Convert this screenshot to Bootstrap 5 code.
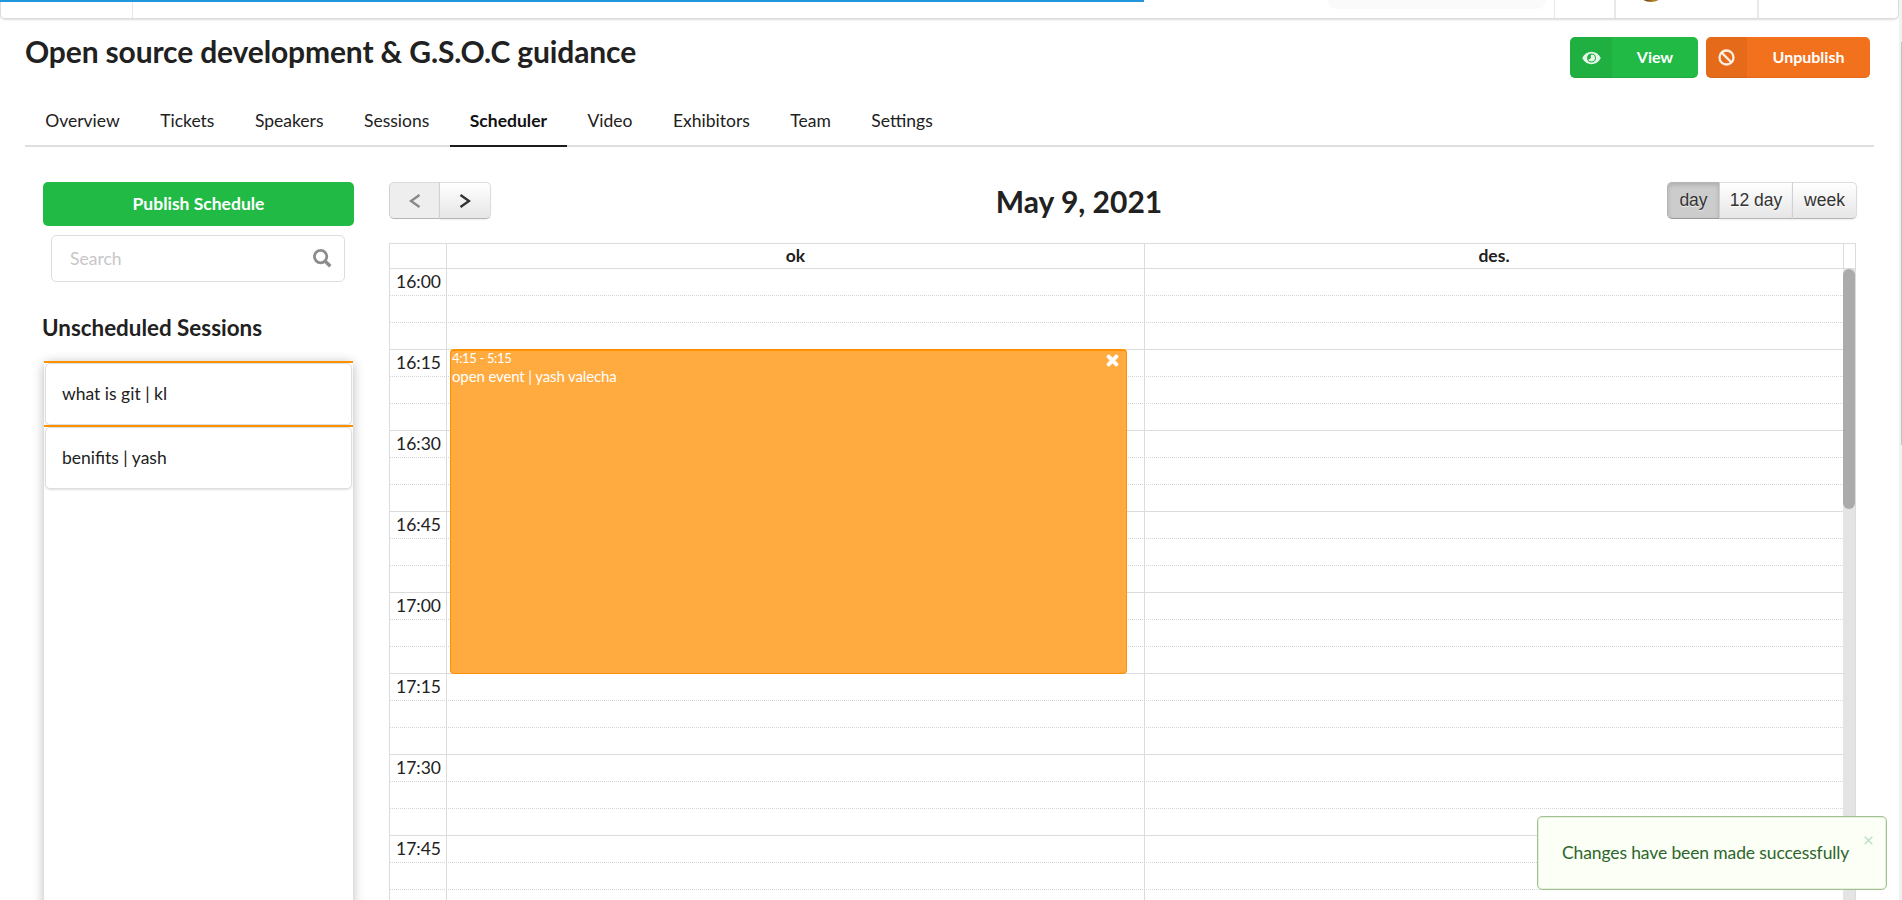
<!DOCTYPE html>
<html lang="en">
<head>
<meta charset="utf-8">
<title>Scheduler</title>
<link href="https://cdn.jsdelivr.net/npm/bootstrap@5.3.0/dist/css/bootstrap.min.css" rel="stylesheet">
<style>
html,body{height:900px;overflow:hidden}
body{font-family:Lato,"Liberation Sans",sans-serif;font-size:17.5px;line-height:25px;color:#212121;background:#fff}
.page{width:1899px;height:900px;overflow:hidden}
.progressline{top:0;left:0;width:1144px;height:2px;background:#2196dc;z-index:5}
.topbar{height:19px;width:1899px;border:1px solid #dcdcdc;border-top:0;border-radius:0 0 5px 5px;box-shadow:0 1px 2px rgba(34,36,38,.15)}
.tb-logo{width:132px;border-right:1px solid #e8e8e8}
.tb-search{width:219px;height:9px;background:#fafafa;border-radius:0 0 9px 9px;margin-right:8px}
.tb-cell{width:60px;border-left:1px solid #e8e8e8}
.tb-cell.thick{width:141px;border-left-width:2px}
.tb-cell.user{width:143px}
.avatar{width:30px;height:30px;border-radius:50%;background:linear-gradient(90deg,#4a2c05 20%,#b8862a 60%,#5c3a08);margin:-28px 0 0 20px}
.titlerow{padding:18px 29px 0 25px;height:79px}
.titlerow h1{font-size:30px;line-height:36px;font-weight:700;letter-spacing:-.14px;margin-top:-4px}
.lbtn{width:128px;height:41px;border-radius:5px;color:#fff;font-weight:700;font-size:16px;line-height:24px;border:0;padding:0;box-shadow:inset 0 -1px 0 rgba(0,0,0,.07);overflow:hidden}
.lbtn.orange{width:164px}
.lbtn .lbl{padding:0 0 2px}
.lbtn .ico{width:42px;height:41px;background:rgba(0,0,0,.05)}
.lbtn.orange .ico{width:41px}
.green{background:#21ba45}
.orange{background:#f2711c}
.tabsrow{margin:0 25px;height:49px;border-bottom:2px solid #dedede;width:1849px}
.tabsrow .nav-link{padding:10px 20.3px 0 20.2px;height:49px;color:#212121;line-height:25px;border-bottom:2px solid transparent}
.tabsrow .nav-link.active{font-weight:700;color:#111;border-bottom-color:#1b1c1d}
.main{padding:35px 0 0 43px;height:753px}
.side{width:311px;margin-right:35px}
.pub{height:44px;border-radius:5px;color:#fff;font-weight:700;font-size:17.5px;padding:0;border:0}
.searchbox{margin:9px 9px 0 8px;height:47px;border:1px solid #dedede;border-radius:5px;padding:0 12px 0 18px;color:#c7c7c7}
.side h3{font-size:22.4px;line-height:28px;font-weight:700;margin:32px 0 19px -1px}
.list-un{width:309px;margin-left:1px;height:560px;box-shadow:0 2px 12px rgba(0,0,0,.28);border-radius:4px 4px 0 0;background:#fff}
.sess{height:64px;border-top:2px solid #ff9100}
.sess>div{height:62px;margin:0 1px;border:1px solid #dedede;border-radius:5px;padding:0 16px 1px;box-shadow:0 1px 2px rgba(34,36,38,.14)}
.cal{width:1468px}
.calhead{height:37px;margin-bottom:24px}
.fcb{font:17.5px/35px "Liberation Sans",Arial,sans-serif;height:37px;padding:0;color:#333;border:1px solid;border-color:#dcdcdc #dcdcdc #b5b5b5;border-left-color:#d0d0d0;border-radius:5px;background:linear-gradient(#fff,#e6e6e6);box-shadow:0 1px 2px rgba(0,0,0,.07);text-shadow:0 1px 1px rgba(255,255,255,.75)}
.fcb.pressed{background:#ccc;border-color:#b5b5b5 #b5b5b5 #999;box-shadow:inset 0 2px 4px rgba(0,0,0,.15)}
.fcb.off{background:#eee;box-shadow:none}
.wnav{width:51px}.wnav+.wnav{width:52px}.wday{width:53px}.wdays{width:74px}.wweek{width:65px}
.calhead h2{font-size:30px;line-height:38px;font-weight:700}
.grid{width:1467px;border:1px solid #dcdcdc;border-bottom:0;height:657px}
.ghead{height:25px;border-bottom:1px solid #dcdcdc;font-weight:700;line-height:23px}
.axis{width:57px;border-right:1px solid #dcdcdc}
.c1{width:698px;border-right:1px solid #dcdcdc}
.c2{width:699px;border-right:1px solid #dcdcdc}
.slots{width:1453px;height:632px;overflow:hidden}
.slot{height:27px;border-bottom:1px dotted #d6d6d6}
.slot.last{border-bottom:1px solid #dcdcdc}
.slot .axis{text-align:right;padding-right:5px;line-height:26px;height:27px}
.slot .c1{height:27px}
.sbar{width:12px;background:#e4e4e4}
.sbar div{height:240px;border-radius:6px;background:#ababab}
.ev{left:60px;top:80px;width:677px;height:325px;background:#ffab40;border:1px solid #ff9100;border-top-width:2px;border-radius:4px;color:#fff;padding:0 1px;font-size:15px;line-height:18px;letter-spacing:-.13px}
.ev .tm{font-size:13px;line-height:15px;height:16px;letter-spacing:-.35px}
.ev svg{right:7px;top:3px}
.toastbox{left:1537px;top:816px;width:350px;height:74px;background:#fcfff5;border:1px solid #a3c293;border-radius:5px;color:#2c662d;padding:23px 24px;box-shadow:inset 0 0 0 1px rgba(163,194,147,.25);letter-spacing:-.12px}
.toastbox svg{right:13px;top:19px}
.pagebar{left:1899px;top:0;width:3px;height:900px;background:#f1f1f1;padding:42px 0 0 2px}
.pagebar div{height:403px;background:#c1c1c1}
</style>
<script src="https://cdn.jsdelivr.net/npm/bootstrap@5.3.0/dist/js/bootstrap.bundle.min.js"></script>
</head>
<body>
<div class="page position-relative">
  <div class="progressline position-absolute"></div>
  <header class="topbar d-flex">
    <div class="tb-logo me-auto"></div>
    <div class="tb-search"></div>
    <div class="tb-cell"></div>
    <div class="tb-cell thick user overflow-hidden"><div class="avatar"></div></div>
    <div class="tb-cell thick"></div>
  </header>
  <div class="titlerow d-flex justify-content-between align-items-start">
    <h1 class="mb-0">Open source development &amp; G.S.O.C guidance</h1>
    <div class="d-flex gap-2">
      <a class="btn lbtn green d-flex"><span class="ico d-flex align-items-center justify-content-center"><svg width="19" height="14" viewBox="0 0 20 15"><path fill="#fff" fill-opacity=".88" fill-rule="evenodd" d="M0 7.500C2.300 3 6 .8 10 .8s7.700 2.200 10 6.700c-2.300 4.500-6 6.700-10 6.700S2.300 12 0 7.500zM10 2.700a4.800 4.800 0 1 0 0 9.600 4.800 4.800 0 0 0 0-9.600zm0 1.100a3.700 3.700 0 1 1-3.600 4.500 1.900 1.900 0 0 0 2.700-2.600A3.700 3.700 0 0 1 10 3.800z"/></svg></span><span class="lbl flex-grow-1 align-self-center text-center">View</span></a>
      <a class="btn lbtn orange d-flex"><span class="ico d-flex align-items-center justify-content-center"><svg width="17" height="17" viewBox="0 0 17 17"><g fill="none" stroke="#fff" stroke-opacity=".88" stroke-width="2.300"><circle cx="8.500" cy="8.500" r="7"/><path d="M3.600 3.600l9.800 9.800"/></g></svg></span><span class="lbl flex-grow-1 align-self-center text-center">Unpublish</span></a>
    </div>
  </div>
  <nav class="nav tabsrow flex-nowrap">
    <a class="nav-link">Overview</a><a class="nav-link">Tickets</a><a class="nav-link">Speakers</a><a class="nav-link">Sessions</a><a class="nav-link active">Scheduler</a><a class="nav-link">Video</a><a class="nav-link">Exhibitors</a><a class="nav-link">Team</a><a class="nav-link">Settings</a>
  </nav>
  <main class="main d-flex">
    <aside class="side flex-shrink-0">
      <button class="btn pub green w-100 d-block">Publish Schedule</button>
      <div class="searchbox d-flex align-items-center justify-content-between"><span>Search</span><svg width="19" height="19" viewBox="0 0 19 19" fill="none" stroke="#8c8c8c"><circle cx="7.600" cy="7.600" r="6.200" stroke-width="2.800"/><path d="M12 12l5.300 5.300" stroke-width="3.400"/></svg></div>
      <h3>Unscheduled Sessions</h3>
      <div class="list-un">
        <div class="sess"><div class="d-flex align-items-center">what is git | kl</div></div>
        <div class="sess"><div class="d-flex align-items-center">benifits | yash</div></div>
      </div>
    </aside>
    <section class="cal flex-shrink-0">
      <div class="calhead d-flex justify-content-between">
        <div class="btn-group"><button class="btn fcb off wnav"><svg width="12" height="14" viewBox="0 0 12 14" fill="none" stroke="#888" stroke-width="2.400"><path d="M10.500 1L2 7l8.500 6"/></svg></button><button class="btn fcb wnav"><svg width="12" height="14" viewBox="0 0 12 14" fill="none" stroke="#333" stroke-width="2.400"><path d="M1.500 1L10 7l-8.500 6"/></svg></button></div>
        <h2 class="mb-0">May 9, 2021</h2>
        <div class="btn-group"><button class="btn fcb pressed wday">day</button><button class="btn fcb wdays">12 day</button><button class="btn fcb wweek">week</button></div>
      </div>
      <div class="grid">
        <div class="ghead d-flex text-center"><div class="axis"></div><div class="c1">ok</div><div class="c2">des.</div></div>
        <div class="d-flex">
          <div class="slots position-relative flex-shrink-0">
            <div id="slots"></div>
            <div class="ev position-absolute"><div class="tm">4:15 - 5:15</div><div>open event | yash valecha</div><svg class="position-absolute" width="13" height="13" viewBox="0 0 13 13"><path d="M2.700 2.700l7.600 7.600M10.300 2.700l-7.600 7.600" stroke="#fff" stroke-width="4" stroke-linecap="round"/></svg></div>
          </div>
          <div class="sbar"><div></div></div>
        </div>
      </div>
    </section>
  </main>
  <div class="toastbox position-absolute">Changes have been made successfully<svg class="position-absolute" width="9" height="9" viewBox="0 0 9 9"><path d="M.7.700l7.600 7.600M8.300.700L.7 8.300" stroke="#b9dfc1" stroke-width="1.300"/></svg></div>
</div>
<div class="pagebar position-absolute"><div></div></div>
<script>
const times=["16:00","16:15","16:30","16:45","17:00","17:15","17:30","17:45"];
document.getElementById("slots").innerHTML=times.map(t=>[t,"",""].map((x,i)=>`<div class="slot d-flex${i===2?" last":""}"><div class="axis">${x}</div><div class="c1"></div></div>`).join("")).join("");
</script>
</body>
</html>
